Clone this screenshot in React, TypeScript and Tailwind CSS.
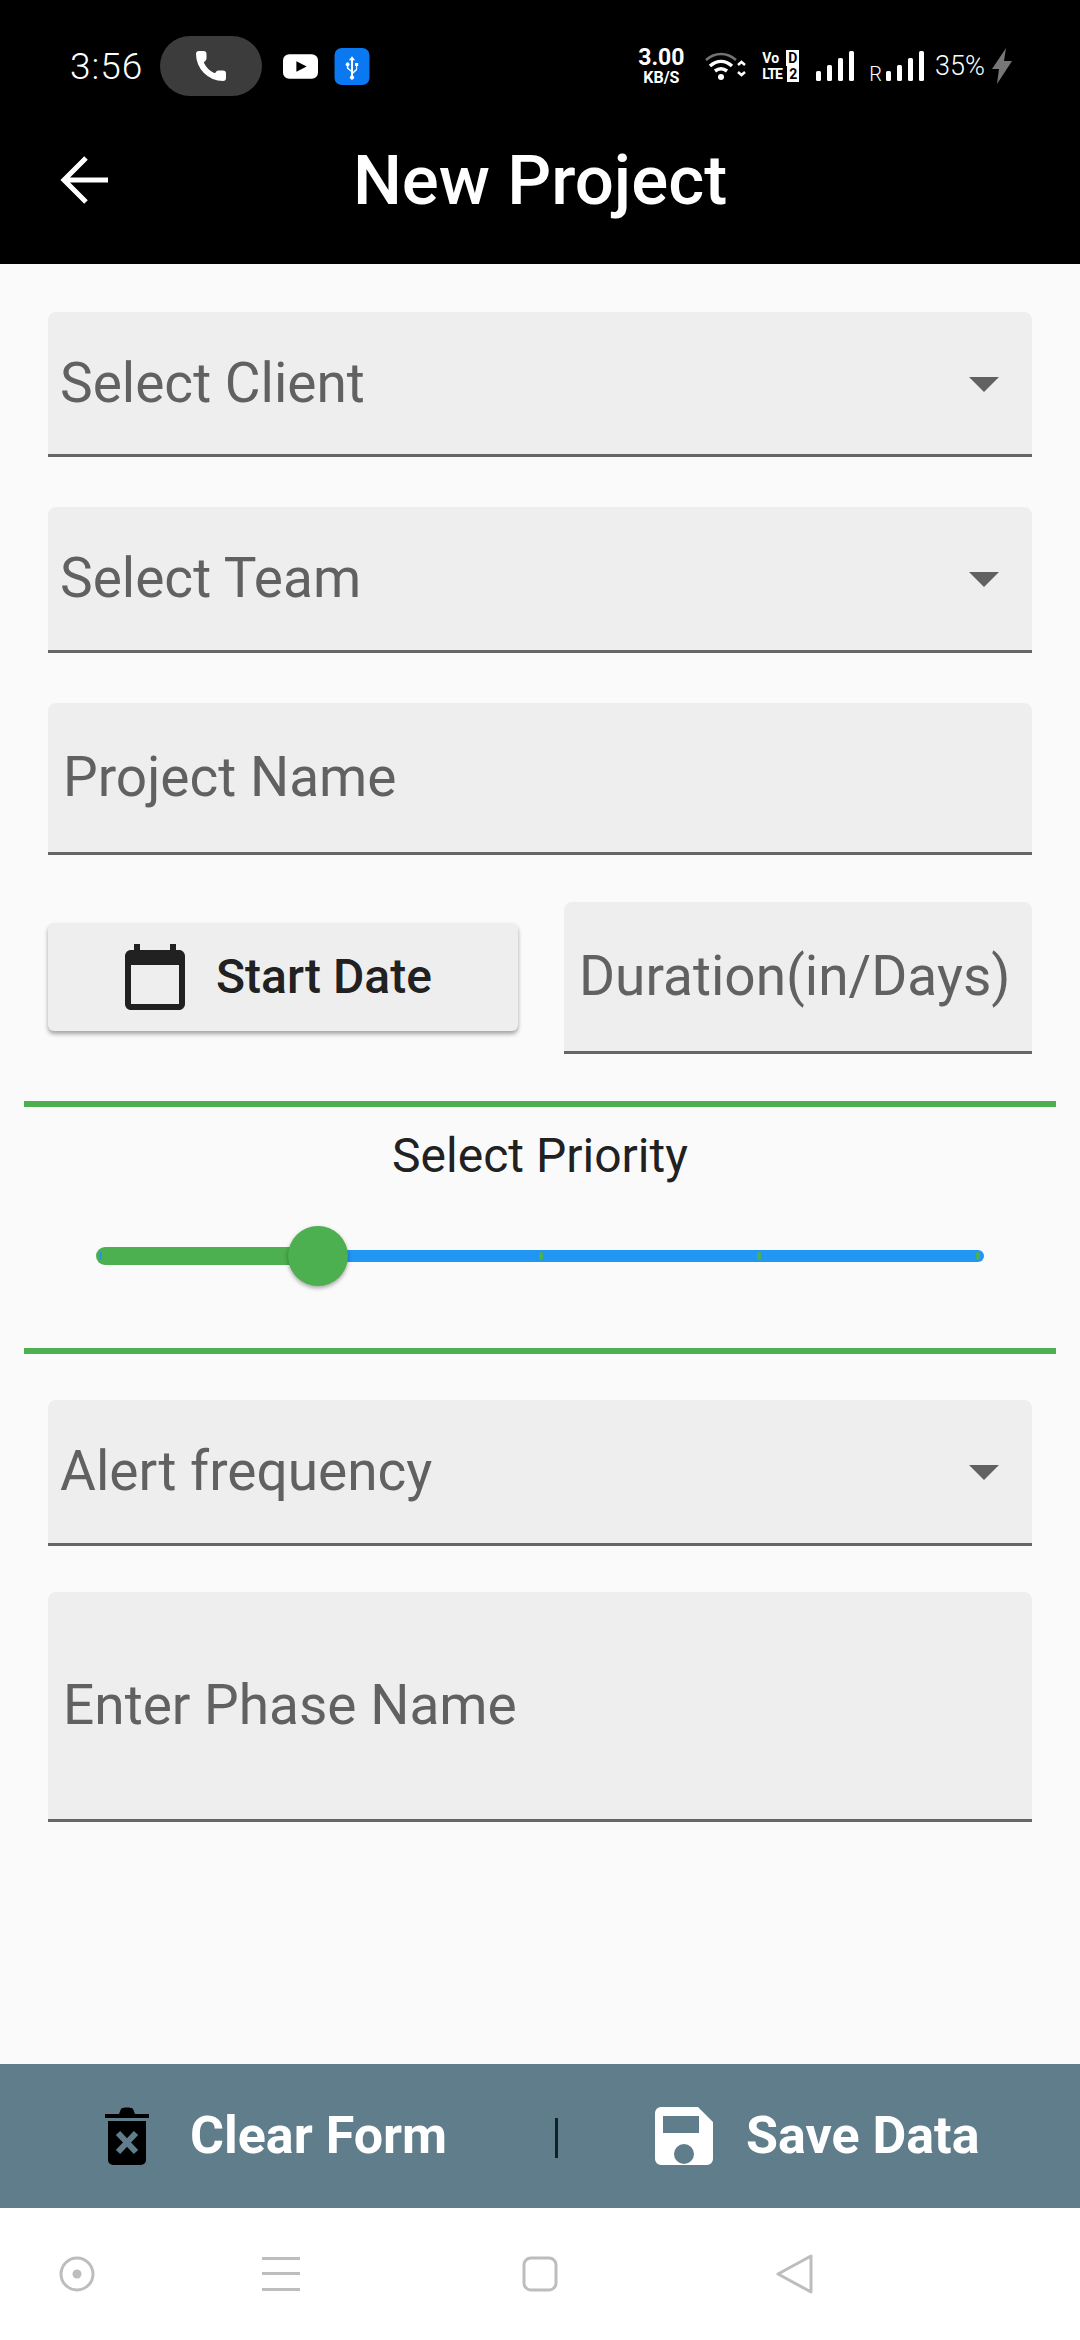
import { Phone } from "lucide-react";

const font = "font-['Roboto',sans-serif]";

function Signal({ className }: { className?: string }) {
  return (
    <svg width="38" height="30" viewBox="0 0 38 30" className={className} fill="#fff">
      <rect x="0" y="20" width="5" height="10" rx="1.5" />
      <rect x="11" y="14" width="5" height="16" rx="1.5" />
      <rect x="22" y="7" width="5" height="23" rx="1.5" />
      <rect x="33" y="0" width="5" height="30" rx="1.5" />
    </svg>
  );
}

function StatusBar() {
  return (
    <div className="flex h-[132px] items-center pl-[70px] pr-[68px] text-white">
      <span className="w-[70px] text-[37px] leading-none font-light tracking-[1px]">3:56</span>
      <div className="ml-[20px] flex h-[60px] w-[102px] items-center justify-center rounded-full bg-[#3c3c3c]">
        <Phone size={36} fill="#fff" strokeWidth={0} />
      </div>
      <svg width="35" height="25" viewBox="0 0 34 24" className="ml-[21px]">
        <rect width="34" height="24" rx="6" fill="#fff" />
        <path d="M13 7l10 5-10 5z" fill="#000" />
      </svg>
      <svg width="36" height="37" viewBox="0 0 34 36" className="ml-[16px]">
        <rect width="34" height="36" rx="7" fill="#0a78f0" />
        <path
          d="M17 8l3 4h-2v11l3-2.500v-3h-1v-3h3v3h-1v4l-4 3.500v2a2 2 0 1 1-2 0v-4l-4-3v-2.500a1.800 1.800 0 1 1 1.500 0v2l2.500 2V12h-2z"
          fill="#fff"
        />
      </svg>
      <div className="ml-auto flex w-[48px] flex-col items-center font-bold">
        <span className="text-[23px] leading-[24px]">3.00</span>
        <span className="text-[16px] leading-[16px]">KB/S</span>
      </div>
      <svg width="42" height="32" viewBox="0 0 42 32" className="ml-[20px]" fill="none" stroke="#fff">
        <path d="M1 10c9-8 21-8 30 0" strokeWidth="2.500" opacity=".45" />
        <path d="M5 16c7-6 15-6 22 0M10 21c4-3 8-3 12 0" strokeWidth="3.500" />
        <circle cx="16" cy="27" r="3" fill="#fff" stroke="none" />
        <path d="M33 15l3.500-3 3.500 3M33 22l3.500 3 3.500-3" strokeWidth="2.500" />
      </svg>
      <div className="ml-[15px] flex w-[37px] flex-col text-[14px] leading-[16px] font-bold">
        <div className="flex justify-between">
          <span>Vo</span>
          <span className="bg-white px-[2px] text-black">D</span>
        </div>
        <div className="flex justify-between">
          <span className="tracking-[-1px]">LTE</span>
          <span className="bg-white px-[2px] text-black">2</span>
        </div>
      </div>
      <Signal className="ml-[17px]" />
      <span className="ml-[15px] mt-[16px] text-[20px] leading-none font-light">R</span>
      <Signal className="ml-[4px]" />
      <span className="ml-[11px] text-[27px] leading-none font-light">35%</span>
      <svg width="20" height="36" viewBox="0 0 20 36" className="ml-[7px]">
        <path d="M14 0L0 21h7L5 36l15-23h-8z" fill="#777" />
      </svg>
    </div>
  );
}

function Toolbar() {
  return (
    <div className="relative flex h-[96px] items-center justify-center">
      <svg width="48" height="48" viewBox="0 0 48 48" className="absolute left-[60px] top-[24px]" fill="none" stroke="#fff" strokeWidth="5">
        <path d="M48 24H4M26 2L4 24l22 22" />
      </svg>
      <span className="text-[69px] leading-none font-medium text-white">New Project</span>
    </div>
  );
}

function Field({ label, height, select, textLeft = 12, className }: { label: string; height: string; select?: boolean; textLeft?: number; className?: string }) {
  return (
    <div className={`flex items-center justify-between rounded-t-[8px] border-b-[3px] border-[#666] bg-[#eeeeee] ${height} ${className ?? ""}`}>
      <span className="text-[55px] leading-none text-[#616161]" style={{ paddingLeft: textLeft }}>
        {label}
      </span>
      {select && <div className="mt-[2px] mr-[33px] h-0 w-0 border-x-[15px] border-t-[15px] border-x-transparent border-t-[#616161]" />}
    </div>
  );
}

function PrioritySlider() {
  return (
    <div className="relative mx-[96px] mt-[43px] flex h-[60px] items-center">
      <div className="h-[18px] w-[222px] rounded-l-full bg-[#4caf50]" />
      <div className="h-[12px] flex-1 rounded-r-full bg-[#2196f3]" />
      <div className="absolute top-[26px] left-[3px] h-[8px] w-[3px] rounded-full bg-[#2196f3]" />
      <div className="absolute top-[26px] left-[443px] h-[8px] w-[4px] rounded-full bg-[#4caf50]" />
      <div className="absolute top-[26px] left-[661px] h-[8px] w-[4px] rounded-full bg-[#4caf50]" />
      <div className="absolute top-[26px] left-[880px] h-[8px] w-[4px] rounded-full bg-[#4caf50]" />
      <div className="absolute top-0 left-[192px] h-[60px] w-[60px] rounded-full bg-[#4caf50] shadow-[0_2px_4px_rgba(0,0,0,0.35)]" />
    </div>
  );
}

function BottomBar() {
  return (
    <div className="flex h-[144px] items-center bg-[#607d8b] text-[52px] font-bold text-white">
      <svg width="44" height="58" viewBox="0 0 44 58" className="ml-[105px]">
        <path d="M0 7h14l2-5c1-2 11-2 12 0l2 5h14v4H0zM3 14h38v39a5 5 0 0 1-5 5H8a5 5 0 0 1-5-5z" fill="#000" />
        <path d="M13 26l18 19M31 26L13 45" stroke="#607d8b" strokeWidth="6" fill="none" />
      </svg>
      <span className="ml-[41px] w-[255px] leading-none whitespace-nowrap">Clear Form</span>
      <div className="mt-[4px] ml-[110px] h-[40px] w-[3px] bg-[#10212c]" />
      <svg width="58" height="58" viewBox="0 0 58 58" className="ml-[97px]">
        <path
          d="M6 0h37l15 15v37a6 6 0 0 1-6 6H6a6 6 0 0 1-6-6V6a6 6 0 0 1 6-6zm2 9v17h36V9zm21 28a10 10 0 1 0 0 20 10 10 0 0 0 0-20z"
          fill="#fff"
          fillRule="evenodd"
        />
      </svg>
      <span className="ml-[33px] leading-none">Save Data</span>
    </div>
  );
}

function NavBar() {
  return (
    <div className="flex h-[132px] items-center bg-white pl-[59px]">
      <svg width="36" height="36" viewBox="0 0 36 36" fill="none" stroke="#bdbdbd" strokeWidth="3">
        <circle cx="18" cy="18" r="16" />
        <circle cx="18" cy="18" r="4.500" fill="#bdbdbd" stroke="none" />
      </svg>
      <svg width="38" height="34" viewBox="0 0 38 34" fill="#bdbdbd" className="ml-[167px]">
        <rect width="38" height="3" />
        <rect y="15" width="38" height="3" />
        <rect y="31" width="38" height="3" />
      </svg>
      <svg width="36" height="36" viewBox="0 0 36 36" fill="none" stroke="#bdbdbd" strokeWidth="3" className="ml-[222px]">
        <rect x="2" y="2" width="32" height="32" rx="7" />
      </svg>
      <svg width="38" height="40" viewBox="0 0 38 40" fill="none" stroke="#bdbdbd" strokeWidth="3" strokeLinejoin="round" className="ml-[218px]">
        <path d="M35 2v36L2 20z" />
      </svg>
    </div>
  );
}

export default function App() {
  return (
    <div className={`${font} flex h-[2340px] w-[1080px] flex-col bg-[#fafafa]`}>
      <div className="bg-black pb-[36px]">
        <StatusBar />
        <Toolbar />
      </div>
      <div className="flex flex-1 flex-col">
        <div className="flex flex-col px-[48px] pt-[48px]">
          <Field label="Select Client" height="h-[145px]" select />
          <Field label="Select Team" height="h-[146px]" select className="mt-[50px]" />
          <Field label="Project Name" height="h-[152px]" textLeft={15} className="mt-[50px]" />
          <div className="mt-[47px] flex items-center justify-between">
            <button className="mb-[3px] flex h-[108px] w-[470px] items-center rounded-[6px] bg-[#eeeeee] pl-[71px] shadow-[0_3px_4px_rgba(0,0,0,0.35)]">
              <svg width="72" height="72" viewBox="0 0 24 24" fill="#212121">
                <path d="M20 3h-1V1h-2v2H7V1H5v2H4c-1.100 0-2 .9-2 2v16c0 1.100.9 2 2 2h16c1.100 0 2-.9 2-2V5c0-1.100-.9-2-2-2zm0 18H4V8h16v13z" />
              </svg>
              <span className="ml-[25px] text-[48px] leading-none font-medium text-[#212121]">Start Date</span>
            </button>
            <Field label="Duration(in/Days)" height="h-[152px]" textLeft={15} className="w-[468px]" />
          </div>
        </div>
        <div className="mx-[24px] mt-[47px] h-[6px] bg-[#4caf50]" />
        <p className="mt-[22px] text-center text-[48px] leading-[54px] text-[#212121]">Select Priority</p>
        <PrioritySlider />
        <div className="mx-[24px] mt-[62px] h-[6px] bg-[#4caf50]" />
        <div className="flex flex-col px-[48px] pt-[46px]">
          <Field label="Alert frequency" height="h-[146px]" select />
          <Field label="Enter Phase Name" height="h-[230px]" textLeft={15} className="mt-[46px]" />
        </div>
        <div className="flex-1" />
      </div>
      <BottomBar />
      <NavBar />
    </div>
  );
}
